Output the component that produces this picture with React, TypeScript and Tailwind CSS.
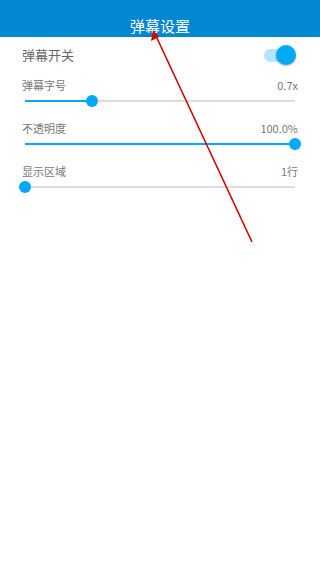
import React from "react";

const font = { fontFamily: '"Noto Sans CJK SC", "Noto Sans", sans-serif' };

function Slider({ label, value, pct }: { label: string; value: string; pct: number }) {
  return (
    <div className="px-[22px] pb-[11px]">
      <div className="flex items-center justify-between h-[16px] text-[11px] text-[#777]">
        <span>{label}</span>
        <span>{value}</span>
      </div>
      <div className="relative h-[16px] mx-[3px] flex items-center">
        <div className="h-[2px] w-full bg-[#dcdcdc]" />
        <div className="absolute left-0 h-[2px] bg-[#03a9f4]" style={{ width: `${pct}%` }} />
        <div
          className="absolute w-[12px] h-[12px] rounded-full bg-[#03a9f4] -translate-x-1/2"
          style={{ left: `${pct}%` }}
        />
      </div>
    </div>
  );
}

export default function App() {
  return (
    <div className="relative w-[320px] h-[568px] bg-white overflow-hidden" style={font}>
      <div className="h-[37px] bg-[#0288d1] flex items-end justify-center">
        <span className="text-white text-[15px] leading-[22px]">弹幕设置</span>
      </div>
      <div className="h-[36px] px-[22px] flex items-center justify-between">
        <span className="text-[13px] text-[#666]">弹幕开关</span>
        <div className="relative w-[32px] h-[20px] mr-[2px] flex items-center">
          <div className="w-[28px] h-[13px] rounded-full bg-[#b3e5fc]" />
          <div className="absolute right-0 w-[20px] h-[20px] rounded-full bg-[#03a9f4] shadow-[0_1px_2px_rgba(0,0,0,0.3)]" />
        </div>
      </div>
      <div className="pt-[4px]">
        <Slider label="弹幕字号" value="0.7x" pct={24.8} />
        <Slider label="不透明度" value="100.0%" pct={100} />
        <Slider label="显示区域" value="1行" pct={0} />
      </div>
      <svg className="absolute inset-0 pointer-events-none" width="320" height="568">
        <line x1="252" y1="242" x2="156" y2="36" stroke="#d40000" strokeWidth="1.6" />
        <polygon points="153,30 151,41 159,37" fill="#d40000" />
      </svg>
    </div>
  );
}
